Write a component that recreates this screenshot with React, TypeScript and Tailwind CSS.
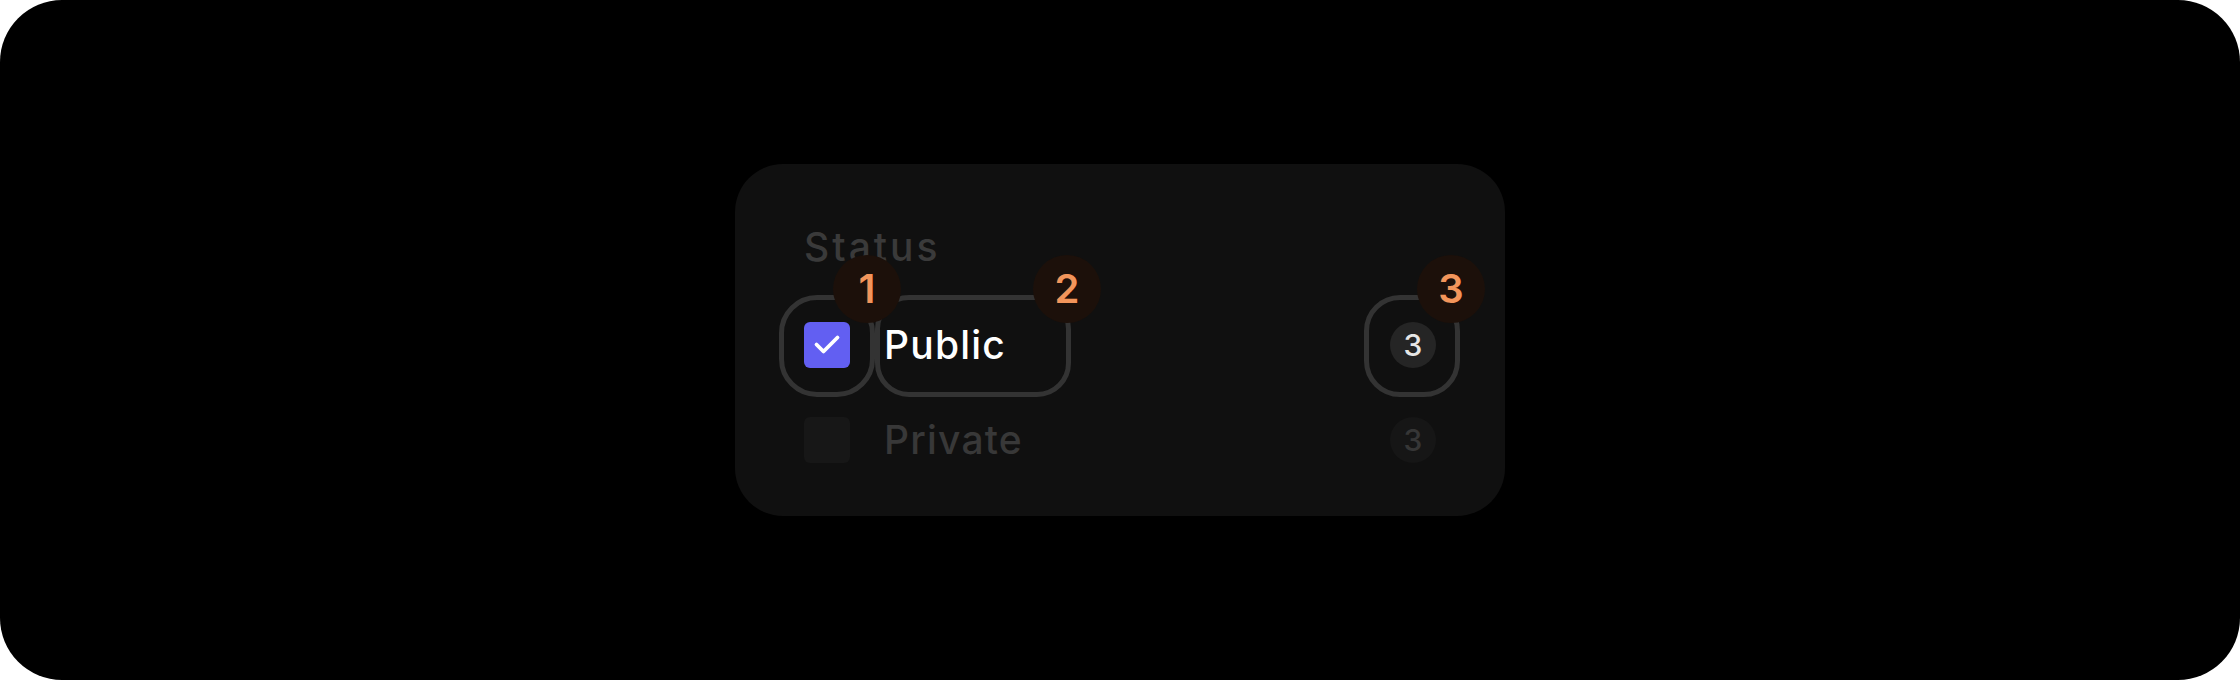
import React from "react";

const font = { fontFamily: "Inter, 'Noto Sans', sans-serif" };

function Badge({ n, className }: { n: string; className: string }) {
  return (
    <div
      className={`absolute z-20 flex h-[68px] w-[68px] items-center justify-center rounded-full bg-[#1c100a] text-[40px] font-semibold leading-none text-[#f2955b] ${className}`}
    >
      {n}
    </div>
  );
}

export default function App() {
  return (
    <div className="h-[680px] w-[2240px] bg-white" style={font}>
      <div className="flex h-full w-full items-center justify-center rounded-[62px] bg-black">
        <div className="flex h-[352px] w-[770px] flex-col rounded-[48px] bg-[#101010] px-[69px] pt-[59px]">
          <div className="text-[39px] font-medium leading-[48px] tracking-[3px] text-[#3a3a3a]">Status</div>

          <div className="relative mt-[51px] flex h-[46px] items-center">
            <div className="absolute left-[-25px] top-[-27px] z-10 h-[102px] w-[96px] rounded-[38px] border-[5px] border-[#333333]" />
            <div className="absolute left-[71px] top-[-27px] z-10 h-[102px] w-[196px] rounded-[34px] border-[5px] border-[#333333]" />
            <div className="absolute left-[560px] top-[-27px] z-10 h-[102px] w-[96px] rounded-[36px] border-[5px] border-[#333333]" />
            <Badge n="1" className="left-[29px] top-[-67px]" />
            <Badge n="2" className="left-[229px] top-[-67px]" />
            <Badge n="3" className="left-[613px] top-[-67px]" />

            <div className="flex h-[46px] w-[46px] items-center justify-center rounded-[6px] bg-[#625ff2]">
              <svg width="30" height="30" viewBox="0 0 30 30" fill="none">
                <path d="M4.5 14.5 L11.5 21.5 L25.5 7.5" stroke="white" strokeWidth="3.8" strokeLinecap="round" strokeLinejoin="round" />
              </svg>
            </div>
            <div className="ml-[34px] text-[39px] font-medium leading-[48px] tracking-[1.2px] text-white">Public</div>
            <div className="ml-auto flex h-[46px] w-[46px] items-center justify-center rounded-full bg-[#252525] text-[30px] font-medium leading-none text-[#e6e6e6]">
              3
            </div>
          </div>

          <div className="mt-[49px] flex h-[46px] items-center">
            <div className="h-[46px] w-[46px] rounded-[6px] bg-[#171717]" />
            <div className="ml-[34px] text-[39px] font-medium leading-[48px] tracking-[1.2px] text-[#383838]">Private</div>
            <div className="ml-auto flex h-[46px] w-[46px] items-center justify-center rounded-full bg-[#161616] text-[30px] font-medium leading-none text-[#363636]">
              3
            </div>
          </div>
        </div>
      </div>
    </div>
  );
}
